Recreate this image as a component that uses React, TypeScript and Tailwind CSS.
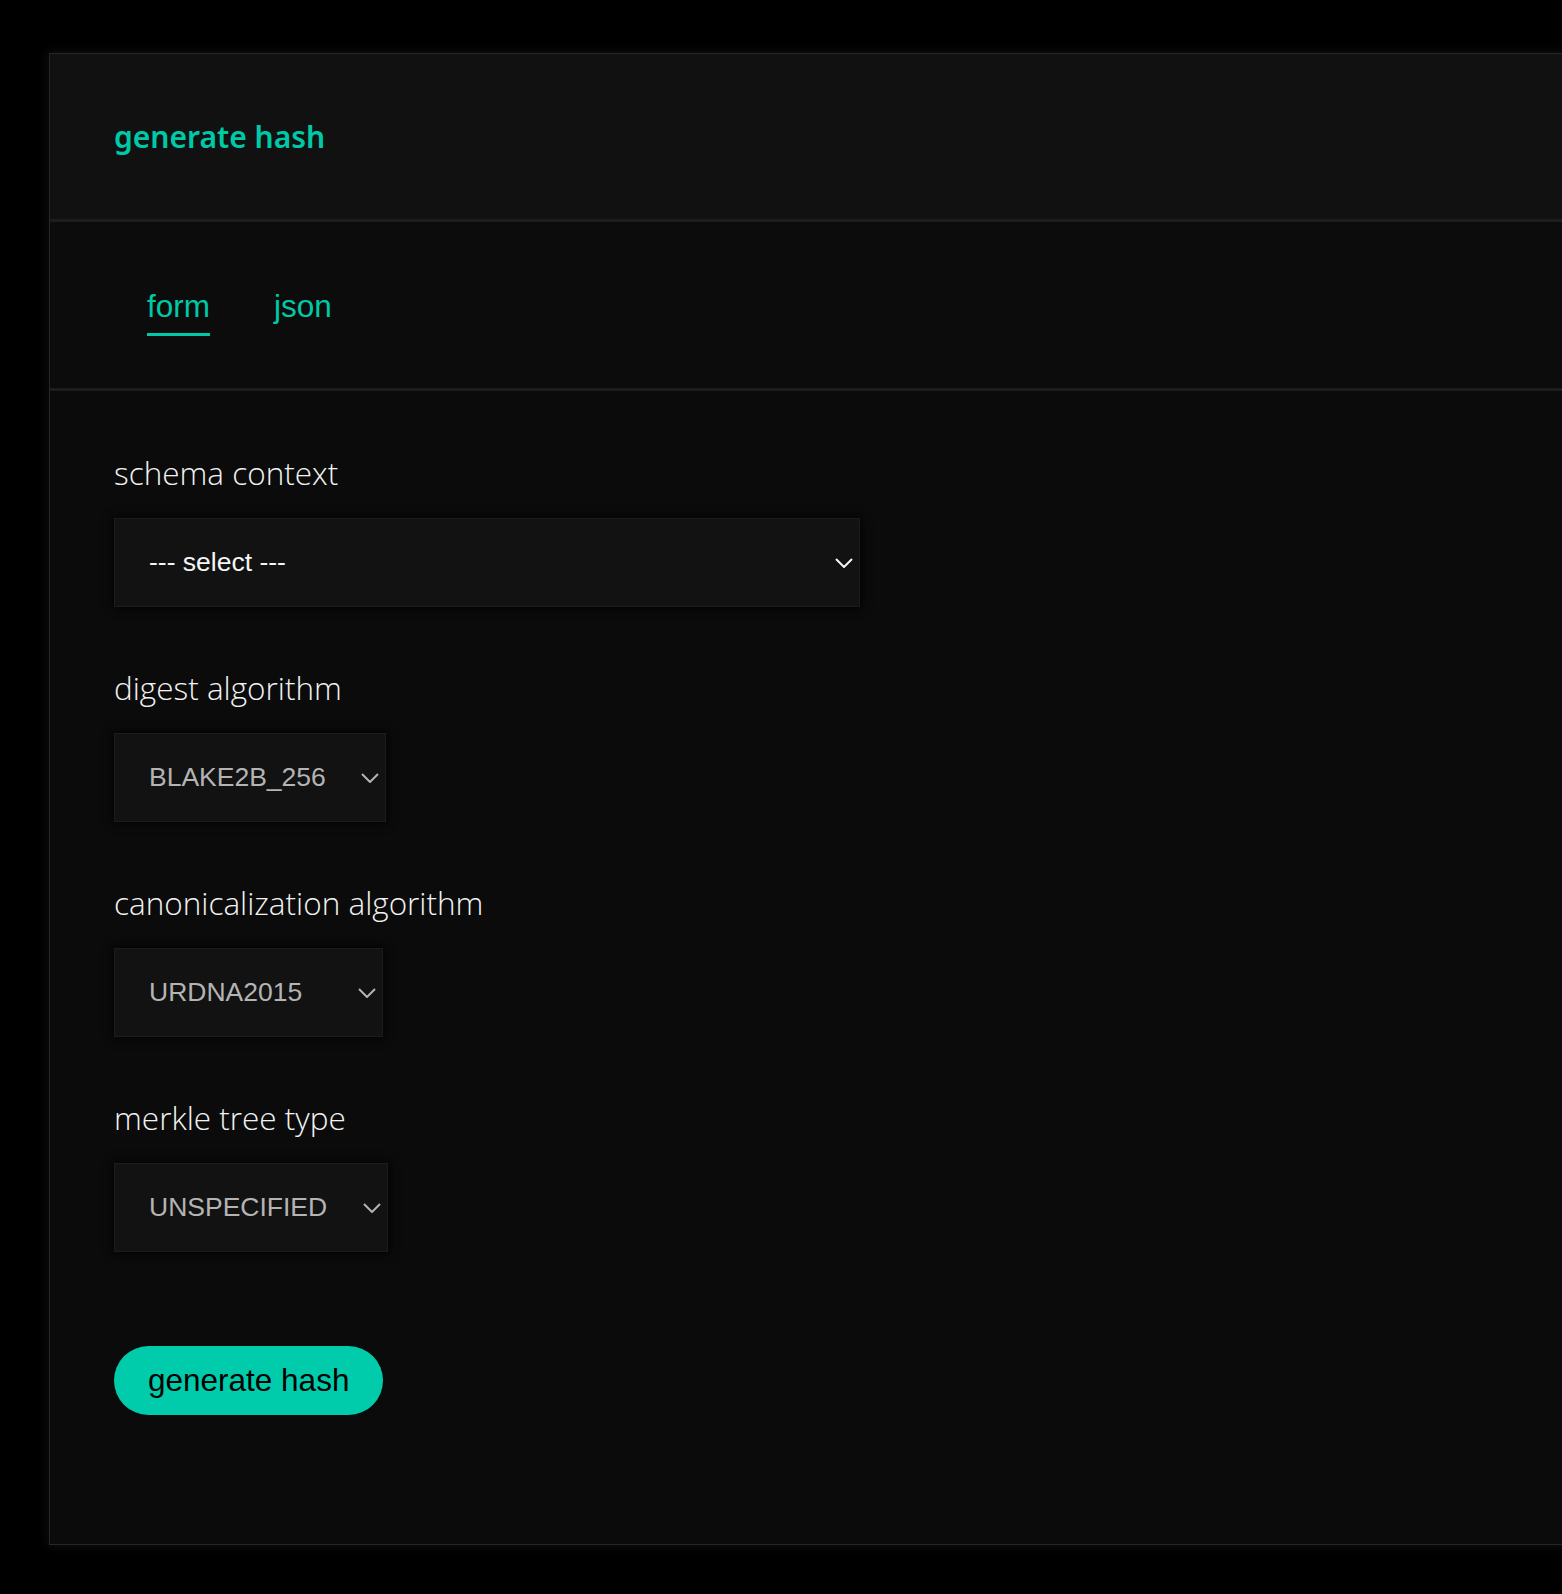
import React from "react";

type FieldProps = {
  label: string;
  value: string;
  width: string;
  bright?: boolean;
};

const Chevron = ({ color }: { color: string }) => (
  <svg width="18" height="10" viewBox="0 0 18 10" fill="none">
    <polyline points="1,1 9,9 17,1" stroke={color} strokeWidth="2" />
  </svg>
);

const SelectField = ({ label, value, width, bright }: FieldProps) => {
  return (
    <div className="flex flex-col">
      <label
        className="h-[36px] text-[31.5px] font-light leading-[36px] text-[#f2f2f2]"
        style={{ fontFamily: '"Open Sans", "Noto Sans", sans-serif' }}
      >
        {label}
      </label>
      <div
        className={`mt-[27px] flex h-[89px] items-center justify-between border border-[#1c1c1c] bg-[#121212] pl-[34px] pr-[6px] shadow-[0_0_8px_2px_rgba(0,0,0,0.75)] ${width}`}
      >
        <span
          className={`text-[26.5px] ${bright ? "text-[#f5f5f5]" : "text-[#b4b4b4]"}`}
          style={{ fontFamily: '"Liberation Sans", Arial, sans-serif' }}
        >
          {value}
        </span>
        <Chevron color={bright ? "#f5f5f5" : "#b4b4b4"} />
      </div>
    </div>
  );
};

export default function App() {
  return (
    <div className="min-h-[1594px] w-full overflow-hidden bg-black pl-[49px] pt-[53px]">
      <div className="w-[1560px] border-b border-l border-t border-[#262626] shadow-[0_0_10px_2px_rgba(40,40,40,0.35)]">
        <div className="flex h-[168px] items-center border-b-[3px] border-[#1d1d1d] bg-[#111111] pl-[64px]">
          <h1
            className="text-[30px] font-semibold text-[#00c9a7]"
            style={{ fontFamily: '"Noto Sans", "Open Sans", sans-serif' }}
          >
            generate hash
          </h1>
        </div>

        <div
          className="flex h-[169px] gap-[64px] border-b-[3px] border-[#1d1d1d] bg-[#0c0c0c] pl-[97px] pt-[66px]"
          style={{ fontFamily: '"Liberation Sans", Arial, sans-serif' }}
        >
          <span className="h-[48px] border-b-[3px] border-[#00c9a7] pb-[9px] text-[31.5px] leading-[36px] text-[#00c9a7]">
            form
          </span>
          <span className="h-[48px] text-[31.5px] leading-[36px] text-[#00c9a7]">
            json
          </span>
        </div>

        <div className="flex flex-col gap-[63px] bg-[#0b0b0b] pb-[129px] pl-[64px] pt-[64px]">
          <SelectField
            label="schema context"
            value="--- select ---"
            width="w-[746px]"
            bright
          />
          <SelectField
            label="digest algorithm"
            value="BLAKE2B_256"
            width="w-[272px]"
          />
          <SelectField
            label="canonicalization algorithm"
            value="URDNA2015"
            width="w-[269px]"
          />
          <SelectField
            label="merkle tree type"
            value="UNSPECIFIED"
            width="w-[274px]"
          />
          <div className="pt-[31px]">
            <button
              className="h-[69px] rounded-full bg-[#00cbaa] px-[34px] text-[31.5px] text-black"
              style={{ fontFamily: '"Liberation Sans", Arial, sans-serif' }}
            >
              generate hash
            </button>
          </div>
        </div>
      </div>
    </div>
  );
}
